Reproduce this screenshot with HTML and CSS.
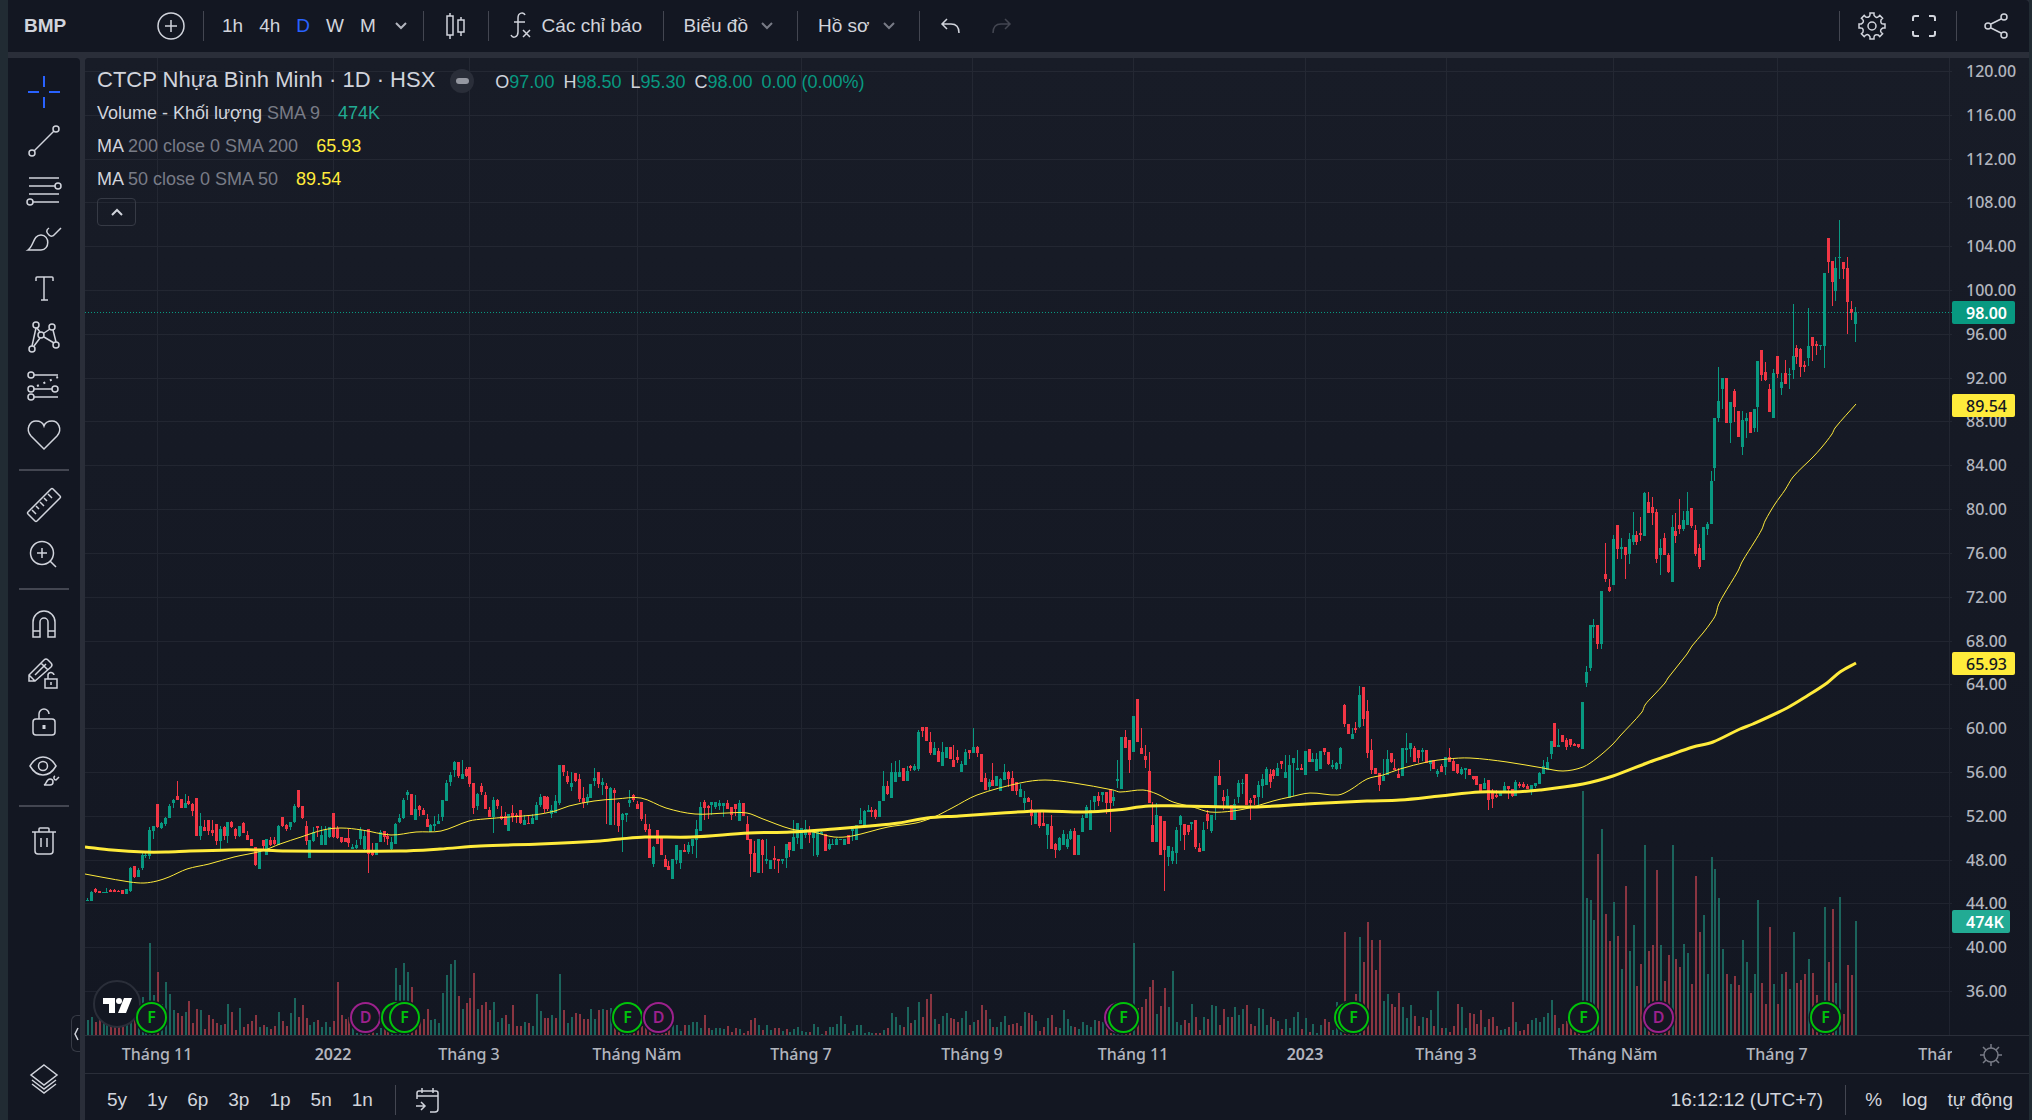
FILE: index.html
```html
<!DOCTYPE html>
<html lang="vi">
<head>
<meta charset="utf-8">
<title>BMP 98.00</title>
<link rel="stylesheet" href="styles.css">
</head>
<body>
<div class="app">
  <header class="topbar">
    <button class="tb symbol">BMP</button>
    <button class="tb add" aria-label="So sánh"><svg class="ic" viewBox="-20 -20 40 40"><circle r="13"/><path d="M-6 0H6M0-6V6"/></svg></button>
    <span class="sep first"></span>
    <nav class="frames">
      <button class="tb">1h</button><button class="tb">4h</button><button class="tb active">D</button><button class="tb">W</button><button class="tb">M</button>
      <button class="tb more" aria-label="Khung thời gian"><svg class="caret light" viewBox="0 0 12 8"><path d="M1 1l5 5 5-5"/></svg></button>
    </nav>
    <span class="sep"></span>
    <button class="tb style" aria-label="Kiểu nến"><svg class="ic" viewBox="-20 -20 40 40"><path d="M-9-10h6V9h-6zM-6-13v3M-6 9v4M2-6h6V6h-6zM5-9v3M5 6v4"/></svg></button>
    <span class="sep"></span>
    <button class="tb indicators"><svg class="ic" viewBox="-20 -20 40 40"><path d="M5-11C4-14-2-14-2-8V6C-2 11-7 13-9 9M-6-4H5M3 4l7 7M10 4l-7 7"/></svg>Các chỉ báo</button>
    <span class="sep"></span>
    <button class="tb layout">Biểu đồ<svg class="caret" viewBox="0 0 12 8"><path d="M1 1l5 5 5-5"/></svg></button>
    <span class="sep"></span>
    <button class="tb profile">Hồ sơ<svg class="caret" viewBox="0 0 12 8"><path d="M1 1l5 5 5-5"/></svg></button>
    <span class="sep"></span>
    <button class="tb undo" aria-label="Hoàn tác"><svg class="ic" viewBox="-20 -20 40 40"><path d="M-3-7l-5 5 5 5M-8-2H1Q9-2 9 7"/></svg></button>
    <button class="tb redo" aria-label="Làm lại"><svg class="ic" viewBox="-20 -20 40 40"><path d="M3-7l5 5-5 5M8-2H-1Q-9-2-9 7"/></svg></button>
    <span class="grow"></span>
    <span class="sep"></span>
    <button class="tb gear" aria-label="Cài đặt"><svg class="ic" viewBox="-20 -20 40 40"><defs><path id="tooth" d="M-2-10.800V-13H2V-10.800Q4-7.500 6.200-9.100"/></defs><use href="#tooth"/><use href="#tooth" transform="rotate(45)"/><use href="#tooth" transform="rotate(90)"/><use href="#tooth" transform="rotate(135)"/><use href="#tooth" transform="rotate(180)"/><use href="#tooth" transform="rotate(225)"/><use href="#tooth" transform="rotate(270)"/><use href="#tooth" transform="rotate(315)"/><circle r="4"/></svg></button>
    <button class="tb full" aria-label="Toàn màn hình"><svg class="ic thick" viewBox="-20 -20 40 40"><path d="M-11-5v-3q0-2 2-2h4M5-10h4q2 0 2 2v3M11 5v3q0 2-2 2H5M-5 10h-4q-2 0-2-2V5"/></svg></button>
    <span class="sep"></span>
    <button class="tb share" aria-label="Chia sẻ"><svg class="ic" viewBox="-20 -20 40 40"><circle cx="-9" r="3"/><circle cx="7" cy="-9" r="3"/><circle cx="7" cy="9" r="3"/><path d="M-6-2L4-7M-6 2L4 7"/></svg></button>
  </header>

  <main class="main">
    <aside class="tools">
      <button class="tool active" aria-label="Con trỏ"><svg class="ic thick" viewBox="-20 -20 40 40"><path d="M-16 0h11M5 0h11M0-16v11M0 5v11"/></svg></button>
      <button class="tool" aria-label="Đường xu hướng"><svg class="ic" viewBox="-20 -20 40 40"><circle cx="-12" cy="12" r="3"/><circle cx="12" cy="-12" r="3"/><path d="M-10 10L10-10"/></svg></button>
      <button class="tool" aria-label="Fibonacci"><svg class="ic" viewBox="-20 -20 40 40"><path d="M-15-12h30M-15-4h26M-15 4h30M-11 12h26"/><circle cx="14" cy="-4" r="3"/><circle cx="-14" cy="12" r="3"/></svg></button>
      <button class="tool" aria-label="Cọ vẽ"><svg class="ic" viewBox="-20 -20 40 40"><path d="M-16 11C-10 7-11-4-3-4 6-4 6 11-3 11zM5-11C2-9 2-7 5-4 7-2 9-3 10-4L17-11"/></svg></button>
      <button class="tool" aria-label="Văn bản"><svg class="ic" viewBox="-20 -20 40 40"><path d="M-8-7v-3q0-1 1-1H8q1 0 1 1v3M0-11V12M-3 12H4"/></svg></button>
      <button class="tool" aria-label="Mô hình"><svg class="ic" viewBox="-20 -20 40 40"><circle cx="-8" cy="-12" r="3"/><circle cx="8" cy="-10" r="3"/><circle cx="-3" cy="-2" r="3"/><circle cx="-12" cy="12" r="3"/><circle cx="12" cy="8" r="3"/><path d="M-12 9l4-18M-7-9l3 4M-4 1l-6 8M0-4l6-4M9-7l3 12M0 0l10 6"/></svg></button>
      <button class="tool" aria-label="Dự báo"><svg class="ic" viewBox="-20 -20 40 40"><circle cx="-13" cy="-11" r="3"/><circle cx="-13" cy="3" r="3"/><circle cx="11" cy="3" r="3"/><circle cx="-13" cy="11" r="3"/><path d="M-10-11h24M-10 3H8M-10 11h24"/><path stroke-dasharray="2 5" stroke-width="2" d="M-7 0L14-9"/></svg></button>
      <button class="tool" aria-label="Biểu tượng"><svg class="ic" viewBox="-20 -20 40 40"><path d="M0 14L-13 1C-19-6-14-14-8-14-4-14-1-12 0-9 1-12 4-14 8-14 14-14 19-6 13 1z"/></svg></button>
      <span class="rule"></span>
      <button class="tool" aria-label="Đo"><svg class="ic" viewBox="-20 -20 40 40"><path d="M9-16l7 7q1 1 0 2L-7 16q-1 1-2 0l-7-7q-1-1 0-2L7-16q1-1 2 0zM-12 5l4 4M-8 1l3 3M-4-3l4 4M0-7l3 3M4-11l4 4"/></svg></button>
      <button class="tool" aria-label="Phóng to"><svg class="ic" viewBox="-20 -20 40 40"><circle cx="-2" cy="-1" r="11.500"/><path d="M6 7l6 6M-7-1H3M-2-6V4"/></svg></button>
      <span class="rule"></span>
      <button class="tool" aria-label="Nam châm"><svg class="ic" viewBox="-20 -20 40 40"><path d="M-11 13V-2a11 11 0 0 1 22 0V13H4V-2a4 4 0 0 0-8 0V13zM-11 7h7M4 7h7"/></svg></button>
      <button class="tool" aria-label="Giữ chế độ vẽ"><svg class="ic" viewBox="-20 -20 40 40"><path d="M-15 8V2L0-13q2-2 4 0l3 3q2 2 0 4L-9 8zM-15 2l6 6M-3-10l7 7M-9 2L2-9M1 6h12v9H1zM4 6V3a3 3 0 0 1 6-1M7 9v3"/></svg></button>
      <button class="tool" aria-label="Khóa"><svg class="ic" viewBox="-20 -20 40 40"><rect x="-11" y="-3" width="22" height="16" rx="3"/><path d="M-5-3v-5a5 5 0 0 1 10 0"/><path stroke-width="3" d="M0 3v4"/></svg></button>
      <button class="tool" aria-label="Ẩn"><svg class="ic" viewBox="-20 -20 40 40"><path d="M-14-5C-7-17 5-17 12-5 5 7-7 7-14-5zM0 14c3-1 2-6 6-6s4 6 0 6zM11 5c-2 1-1 4 1 4l3-3"/><circle cx="-1" cy="-5" r="4.500"/></svg></button>
      <span class="rule"></span>
      <button class="tool" aria-label="Xóa"><svg class="ic" viewBox="-20 -20 40 40"><path d="M-12-9h24M-5-9v-3q0-1 1-1h8q1 0 1 1v3M-9-9V10q0 3 3 3H6q3 0 3-3V-9M-3-3v9M3-3v9"/></svg></button>
      <span class="grow"></span>
      <button class="tool layers" aria-label="Cây đối tượng"><svg class="ic" viewBox="-20 -20 40 40"><path d="M0-14L13-4 0 6-13-4zM-12 1L0 10 12 1M-12 5L0 14 12 5"/></svg></button>
      <button class="handle" aria-label="Ẩn thanh công cụ"><svg viewBox="0 0 8 16"><path d="M6 2L3 8l3 6"/></svg></button>
    </aside>

    <section class="chart">
      <div class="panes">
        <svg class="plot" id="plot"></svg>
        <svg class="prices" id="prices"></svg>
        <div class="legend">
          <div class="line head">
            <h1>CTCP Nhựa Bình Minh · 1D · HSX</h1>
            <span class="status"></span>
            <span class="ohlc"><span>O<b>97.00</b></span><span>H<b>98.50</b></span><span>L<b>95.30</b></span><span>C<b>98.00</b></span><span><b>0.00 (0.00%)</b></span></span>
          </div>
          <div class="line">Volume - Khối lượng <i>SMA 9</i><b class="vol">474K</b></div>
          <div class="line">MA <i>200 close 0 SMA 200</i><b class="ma">65.93</b></div>
          <div class="line">MA <i>50 close 0 SMA 50</i><b class="ma">89.54</b></div>
          <button class="fold" aria-label="Thu gọn"><svg viewBox="0 0 12 8"><path d="M1 7l5-5 5 5"/></svg></button>
        </div>
      </div>
      <div class="times">
        <svg class="ticks" id="ticks"></svg>
        <button class="sun" aria-label="Cài đặt trục"><svg viewBox="-12 -12 24 24"><circle r="7"/><path d="M0-7v-4M0 7v4M-7 0h-4M7 0h4M-5-5l-3-3M5-5l3-3M-5 5l-3 3M5 5l3 3"/></svg></button>
      </div>
      <footer class="bottom">
        <button>5y</button><button>1y</button><button>6p</button><button>3p</button><button>1p</button><button>5n</button><button>1n</button>
        <span class="sep"></span>
        <button class="goto" aria-label="Đi đến ngày"><svg class="ic" viewBox="-20 -20 40 40"><path d="M-10-1v-6q0-2 2-2H9q2 0 2 2V9q0 3-3 3H3M-10-4h21M-5-12v5M6-12v5M-11 6h9M-6 2l4 4-4 4"/></svg></button>
        <span class="grow"></span>
        <button class="clock">16:12:12 (UTC+7)</button>
        <span class="sep"></span>
        <button class="pct">%</button><button>log</button><button>tự động</button>
      </footer>
    </section>
  </main>
</div>
<script src="chart.js"></script>
</body>
</html>
```
FILE: styles.css
```css
* { box-sizing: border-box; }

body {
  margin: 0;
  background: #212b33;
  color: #d1d4dc;
  font-family: "Liberation Sans", Arial, sans-serif;
  font-size: 19px;
}

button {
  margin: 0;
  padding: 0;
  border: 0;
  background: none;
  color: inherit;
  font: inherit;
  white-space: nowrap;
}

svg { display: block; fill: none; stroke: currentColor; }

.app {
  display: flex;
  flex-direction: column;
  gap: 6px;
  min-height: 100vh;
  margin: 0 3px 0 8px;
  background: #2a2e39;
}

.grow { flex: 1; }
.sep { flex: none; width: 1px; height: 30px; background: #434651; }
.ic { width: 40px; height: 40px; stroke-width: 1.500; }
.ic.thick { stroke-width: 2; }

/* Top bar */
.topbar {
  display: flex;
  align-items: center;
  height: 52px;
  background: #131722;
  border-radius: 0 4px 0 0;
}
.tb { display: flex; align-items: center; justify-content: center; height: 38px; }
.symbol { width: 140px; padding-left: 16px; justify-content: flex-start; font-weight: bold; }
.add { width: 46px; }
.sep.first { margin: 0 10px 0 9px; }
.frames { display: flex; }
.frames .tb { padding: 0 8px; }
.frames .more { width: 39px; padding: 0 4px 0 0; }
.tb.active { color: #2962ff; }
.caret { width: 12px; height: 8px; stroke: #787b86; stroke-width: 2; }
.caret.light { stroke: #b2b5be; }
.style { width: 64px; }
.indicators { width: 174px; gap: 2px; padding-right: 10px; }
.layout { width: 133px; gap: 13px; padding-right: 4px; }
.profile { width: 121px; gap: 13px; padding-right: 4px; }
.undo { width: 60px; }
.redo { width: 44px; color: #434651; }
.gear { width: 64px; }
.full { width: 52px; padding-right: 12px; }
.share { width: 72px; padding-left: 8px; }

/* Body */
.main { display: flex; flex: 1; gap: 5px; }

.tools {
  position: relative;
  display: flex;
  flex-direction: column;
  align-items: center;
  width: 72px;
  padding-top: 9px;
  background: #131722;
  border-radius: 0 4px 0 0;
}
.tool { display: grid; place-items: center; width: 49px; height: 49px; }
.tool.active { color: #2962ff; }
.rule { width: 50px; height: 2px; margin: 10px 0 9px; background: #434651; }
.layers { margin-bottom: 17px; }
.handle {
  position: absolute;
  right: 0;
  bottom: 68px;
  width: 9px;
  height: 37px;
  border: 1px solid #363a45;
  border-right: 0;
  border-radius: 6px 0 0 6px;
}
.handle svg { width: 8px; height: 16px; stroke-width: 1.500; }

.chart { display: flex; flex: 1; flex-direction: column; min-width: 0; background: #131722; border-radius: 4px 0 0 0; }
.panes {
  position: relative;
  display: flex;
  flex: 1;
  min-height: 977px;
  background: linear-gradient(#181c27, #131722);
  border-radius: 4px 0 0 0;
}
.plot { flex: 1; min-width: 0; }
.prices { flex: none; width: 77px; }

.legend { position: absolute; top: 6px; left: 12px; font-size: 18px; }
.line { display: flex; align-items: center; height: 33px; white-space: pre; }
.line b, .line i { font-weight: normal; font-style: normal; }
.line i { color: #787b86; }
.line h1 { margin: 0; padding-bottom: 2px; font-size: 22px; font-weight: normal; }
.line .vol { margin-left: 18px; color: #22ab94; }
.line .ma { margin-left: 18px; color: #ffeb3b; }
.status { display: grid; place-items: center; width: 24px; height: 24px; margin: 0 21px 0 15px; border-radius: 12px; background: #2a2e39; }
.status::before { content: ""; width: 13px; height: 6px; border-radius: 3px; background: #9598a1; }
.ohlc { display: flex; gap: 9px; padding-top: 3px; }
.ohlc b { color: #089981; }
.fold { display: grid; place-items: center; width: 39px; height: 28px; margin-top: 2px; border: 1px solid #363a45; border-radius: 4px; }
.fold svg { width: 12px; height: 8px; stroke-width: 2; }

.times { display: flex; height: 39px; border-top: 1px solid #2a2e39; border-bottom: 1px solid #2a2e39; }
.ticks { flex: 1; min-width: 0; height: 37px; }
.sun { display: grid; place-items: center; width: 77px; color: #787b86; }
.sun svg { width: 24px; height: 24px; stroke-width: 1.500; }

.bottom { display: flex; align-items: center; height: 46px; padding: 6px 6px 0 12px; }
.bottom button { padding: 0 10px; }
.bottom .sep { margin: 0 9px 0 12px; }
.bottom .goto { padding: 0 2px; }

/* Chart drawing */
.grid { stroke: #f0f3fa; stroke-opacity: .06; }
.up { fill: #089981; stroke: none; }
.down { fill: #f23645; stroke: none; }
.vol-up { fill: #1b645c; stroke: none; }
.vol-down { fill: #8a3541; stroke: none; }
.ma50 { stroke: #ffeb3b; stroke-width: 1; }
.ma200 { stroke: #ffeb3b; stroke-width: 3; }
.last { stroke: #089981; stroke-dasharray: 1 2; }
.axis { fill: #b2b5be; stroke: none; font-family: "Noto Sans", sans-serif; font-size: 16px; font-weight: 500; }
.axis.year { font-weight: 600; }
.axis.white { fill: #fff; font-weight: 600; }
.axis.black { fill: #131722; }
.mid { text-anchor: middle; }
.badge { font-family: "Noto Sans", sans-serif; font-size: 16px; font-weight: 600; text-anchor: middle; stroke: none; }
```
FILE: chart.js
```js
const NS = 'http://www.w3.org/2000/svg';
const LAST_X = 1855, STEP = 3.903, LEFT = 85, TOP = 58, BASE = 1035, AXIS = 1952;

// Blocks of bars: origin, horizontal and vertical units per pixel, rows.
// Candle row: x high bodyTop bodyBottom low direction
const candles = [
  [80, 740, 2.8, 3, `21 474 480 483 483 g,32 453 456 483 483 g,43 444 447 457 459 r,54 453 453 459 459 r,65 456 456 459 459 g,75 444 456 459 459 g,86 447 450 456 456 r,97 447 450 456 456 r,108 450 453 456 456 r,119 450 450 462 462 r,130 447 447 462 462 g,141 381 384 453 456 g,152 378 378 411 414 r,163 384 390 411 411 g,172 334 345 384 390 g,183 340 345 348 354 g,194 261 270 348 357 g,206 258 258 273 297 g,217 192 192 262 265 r,228 246 249 264 267 g,239 231 234 252 258 g,250 192 198 234 234 g,261 177 180 189 204 g,272 123 168 180 180 r,284 177 177 204 204 r,293 162 189 204 204 g,304 168 183 192 195 r,315 189 192 213 228 r,326 174 174 288 288 r,337 219 258 288 300 g,348 240 261 273 273 r,359 240 240 273 285 r,371 240 270 279 288 r,382 252 252 303 315 r,393 258 267 303 330 g,402 258 261 288 300 r,413 246 246 288 309 g,424 243 246 261 264 r,435 264 267 288 297 r,446 258 258 288 291 g,458 246 249 279 279 r,469 273 285 300 300 r,480 297 297 318 318 r,491 321 321 375 378 r,502 330 330 387 387 g,511 300 300 318 330 r,522 297 297 345 345 g,533 291 300 315 318 r,544 291 300 312 315 r,556 255 258 315 315 g,567 231 231 258 261 r,578 252 255 267 273 r,589 246 246 261 270 g,600 192 198 246 249 g,611 150 150 201 204 r,620 198 198 234 237 r,631 243 258 303 315 r,642 300 300 354 354 g,653 261 276 303 306 g,664 258 258 264 291 r,676 258 285 315 315 g,687 258 270 315 315 g,698 261 261 291 294 g,709 219 219 291 294 r,720 258 264 294 297 r,731 291 291 306 309 r,740 294 294 306 306 r,751 267 294 309 321 r,763 312 321 327 327 g,774 300 315 324 327 g,785 261 270 297 315 g,796 273 288 327 333 g,807 267 267 342 399 r,818 309 336 345 348 r,829 309 309 345 345 g,838 270 276 306 306 g,849 273 273 291 306 r,860 279 288 297 315 r,872 291 306 327 330 g,883 249 252 312 312 g,894 222 234 246 249 g,905 174 180 234 237 g,917 150 156 165 180 g,928 162 162 225 225 r,939 165 207 240 240 g,948 195 198 210 228 r,959 204 210 225 225 r,970 222 237 261 261 r,981 252 255 276 276 g,992 228 252 258 273 g,1003 222 243 252 252 g,1014 180 180 231 243 g,1026 120 129 183 183 g,1037 96 105 126 138 g,1048 63 66 90 111 g,1057 66 66 108 114 r,1068 60 102 117 117 g,1080 81 87 108 111 r,1091 81 81 132 141 r,1102 129 129 204 222 r,1113 159 162 198 210 g,1124 129 138 156 165 r,1135 156 165 207 207 r,1146 201 210 231 231 r,1157 171 180 231 279 g,1168 177 180 198 207 r,1177 198 228 237 240 r,1188 216 228 255 255 r,1200 222 222 273 273 g,1211 195 219 231 246 r,1222 219 225 231 249 r,1233 210 210 249 252 r,1244 225 240 255 255 g,1255 228 249 252 252 r,1266 222 234 252 252 g,1277 186 195 240 240 g,1286 162 171 195 201 g,1297 168 168 207 219 r,1309 168 171 207 213 r,1320 195 210 222 234 g,1331 165 183 219 219 g,1342 75 75 189 195 g,1353 75 75 96 108 r,1364 93 108 126 132 r,1376 96 129 141 153 g,1387 99 99 123 126 r,1396 102 117 177 186 r,1407 141 174 189 204 r,1418 162 171 186 195 g,1429 132 132 174 174 g,1440 84 114 123 138 g,1451 96 96 132 144 r,1462 114 126 135 165 g,1473 129 138 147 252 r,1485 141 144 255 255 g,1496 144 150 159 255 r,1505 186 189 258 276 r`],
  [620, 700, 2.8, 3, `4 340 342 360 456 g,15 340 340 346 366 g,26 270 300 309 321 g,37 282 285 300 306 r,49 303 312 327 327 r,60 306 306 357 363 r,71 342 372 390 396 r,82 372 387 474 474 r,94 438 441 492 501 g,102 390 390 432 432 r,113 411 411 465 465 r,124 465 477 501 501 r,136 483 498 510 510 r,147 477 477 537 537 g,158 435 435 480 492 g,169 450 450 489 507 g,180 432 450 456 456 r,192 426 435 456 462 g,203 417 417 438 462 g,211 360 387 420 474 g,222 306 321 393 393 g,234 300 306 324 360 r,245 315 318 324 357 r,256 306 306 315 345 g,267 306 306 321 327 g,278 300 309 318 330 g,289 309 309 318 351 g,301 300 309 327 327 r,312 321 321 345 360 r,320 312 312 327 348 r,332 300 309 363 363 g,343 309 309 348 348 r,354 348 372 420 420 r,365 417 417 462 531 r,376 423 459 516 516 r,388 417 417 519 519 g,399 417 420 465 519 r,410 417 477 483 492 g,421 480 480 507 507 g,430 438 474 480 507 r,441 477 477 483 519 r,452 477 477 483 492 g,463 432 432 474 504 g,474 426 426 450 471 r,486 360 411 453 453 g,497 369 369 414 432 g,508 384 384 447 447 g,519 360 387 405 414 g,530 378 390 405 429 r,541 390 393 414 468 g,550 390 390 465 471 g,561 393 396 402 402 g,572 402 402 453 453 r,583 417 432 447 450 g,595 417 432 435 435 g,606 414 417 435 435 g,617 417 417 420 420 g,628 417 417 435 435 g,640 405 405 432 432 r,651 381 387 393 423 g,659 375 375 420 420 g,670 324 360 372 372 g,682 330 333 375 375 g,693 315 330 336 336 g,704 321 330 336 351 r,715 327 330 351 357 r,726 303 303 351 351 g,738 213 258 303 303 g,749 243 258 282 285 r,760 189 216 294 294 g,768 183 216 246 246 g,780 180 216 231 231 g,791 204 204 243 243 r,802 198 213 243 243 g,813 195 198 204 213 r,824 192 198 210 213 g,836 90 96 207 213 g,847 81 81 93 111 r,858 81 81 123 123 r,869 96 126 159 165 r,877 126 144 165 165 g,889 144 153 186 186 r,900 126 156 198 198 g,911 141 141 174 174 g,922 141 141 177 177 r,933 135 180 201 201 r,945 150 171 180 189 r,956 183 192 216 216 g,967 147 156 195 195 g,978 150 150 159 177 r,987 84 141 159 159 g,998 138 141 159 171 r,1009 162 162 246 246 r,1020 219 234 270 270 r,1032 237 246 261 273 g,1043 189 240 258 258 r,1054 228 228 258 258 g,1065 234 237 273 273 g,1076 192 216 240 240 g,1087 213 216 237 261 r,1096 213 234 273 273 r,1107 246 246 273 285 r,1119 252 267 291 291 g,1132 273 294 309 330 g,1144 291 294 306 306 r,1155 300 327 348 375 r,1166 330 330 372 372 g,1177 330 330 378 384 r,1188 336 369 378 378 r,1200 372 372 405 447 g,1208 345 378 447 447 r,1219 429 432 450 474 r,1230 411 414 450 453 g,1242 390 402 435 435 g,1253 402 417 441 447 g,1264 387 393 417 420 g,1275 384 393 465 465 r,1286 405 405 465 465 g,1298 345 354 396 396 g,1309 315 321 354 354 g,1317 300 330 390 390 g,1328 288 288 306 330 g,1340 276 288 303 318 r,1351 276 276 285 306 g,1362 276 276 309 342 r,1373 267 267 309 396 r,1384 273 291 303 318 g,1395 180 237 243 264 g`],
  [1120, 660, 3, 3, `7 231 231 387 387 g,19 210 231 264 264 r,31 240 240 300 339 r,40 168 168 276 276 g,52 117 117 246 246 r,64 204 264 282 282 r,76 255 288 300 324 r,88 276 333 429 429 r,100 426 495 546 546 r,112 429 465 546 546 g,124 468 468 585 585 r,136 483 483 570 693 r,148 558 558 591 618 g,157 561 573 603 612 g,169 501 510 579 612 g,181 465 468 495 543 g,193 492 492 525 570 r,205 495 495 516 525 r,217 486 486 492 510 g,229 480 480 561 567 r,241 549 564 576 576 r,253 486 510 573 573 g,265 450 462 483 507 r,274 465 465 513 519 g,286 348 348 444 480 g,298 300 348 375 375 r,310 390 411 423 450 r,322 387 408 438 438 g,334 435 435 480 480 r,346 417 432 480 480 g,358 360 369 411 429 g,370 357 369 372 402 g,382 342 342 435 435 r,391 414 420 429 480 r,403 405 405 414 435 r,415 363 375 411 438 g,427 342 357 378 414 g,439 321 327 375 375 g,451 327 342 366 384 r,463 327 330 348 357 r,475 309 324 348 348 g,487 303 303 312 327 r,499 285 336 354 354 g,508 285 315 414 414 g,520 294 294 309 408 g,532 270 324 330 330 g,544 312 324 330 330 r,556 273 273 345 345 g,568 267 267 306 306 r,580 279 297 306 306 g,592 279 297 333 333 g,604 273 273 327 327 g,616 264 264 276 285 r,625 276 276 312 315 r,637 300 315 321 327 g,649 306 309 327 330 g,661 261 264 312 327 g,673 132 135 192 201 r,685 192 192 222 222 r,697 204 222 237 237 g,709 186 204 210 219 r,721 78 105 201 204 g,733 81 81 177 198 r,742 120 153 279 294 r,754 237 270 330 342 r,766 324 324 342 342 r,778 339 339 375 393 r,790 297 348 363 363 g,802 270 297 345 345 g,814 279 279 306 309 r,826 297 324 330 330 r,838 324 342 354 354 r,850 264 264 348 348 g,859 219 264 270 309 g,871 249 249 267 291 g,883 258 264 306 306 r,895 270 270 294 309 r,907 264 270 276 303 g,919 270 270 309 309 r,931 300 300 312 333 g,943 300 300 327 327 r,955 327 333 342 351 g,967 312 318 336 336 r,979 291 291 321 345 g,988 264 291 306 306 r,1000 297 303 333 333 r,1012 312 312 339 342 r,1024 321 327 342 345 g,1036 324 324 330 357 g,1048 327 327 345 345 r,1060 348 348 357 360 r,1072 348 348 375 375 r,1084 372 372 396 396 r,1096 354 369 387 387 g,1105 360 360 420 450 r,1117 387 399 417 444 r,1129 390 405 411 414 r,1141 393 396 408 408 g,1153 366 378 393 393 g,1165 378 378 387 417 r,1177 387 387 408 411 r,1189 360 366 408 408 g,1201 366 372 378 384 r,1213 366 372 381 384 r,1222 372 378 387 387 r,1234 375 375 390 405 g,1246 369 369 378 384 g,1258 336 339 372 372 g,1270 300 318 342 342 g,1282 291 306 330 330 g,1294 243 243 282 297 g,1306 189 189 261 261 r,1318 207 255 261 261 g,1330 225 225 246 246 r,1339 234 240 261 270 r,1351 237 237 255 261 r,1363 249 252 258 258 r,1375 252 252 261 264 r,1387 126 126 267 267 g`],
  [1540, 360, 3, 3, `139 918 936 969 981 g,151 795 795 924 933 g,163 777 795 801 834 g,175 795 795 852 867 r,187 693 693 852 867 g,196 549 642 657 666 r,208 657 681 693 696 r,220 525 537 675 675 g,232 495 495 567 597 r,244 534 561 567 597 g,256 561 561 585 657 r,268 519 537 582 612 g,280 456 525 546 555 g,292 513 525 546 555 r,304 471 519 525 543 r,313 396 399 528 528 g,325 396 426 459 459 r,337 411 441 459 495 r,349 447 456 597 609 r,361 537 564 585 645 g,373 519 534 585 585 r,385 579 585 636 639 r,397 465 501 666 666 g,409 459 513 528 549 r,421 417 495 507 522 r,430 453 480 507 513 g,442 396 453 495 495 g,454 444 444 498 504 r,466 495 510 582 588 r,478 552 564 621 627 r,490 501 501 600 600 g,502 486 492 507 525 g,514 333 363 492 492 g,526 174 174 324 363 g,538 21 123 174 186 g,547 54 54 87 147 g,559 54 54 189 189 r,571 126 126 189 249 g,583 87 93 141 186 r,595 153 153 231 231 r,607 153 180 261 285 g,619 159 174 183 234 g,631 156 156 219 219 r,643 147 147 204 216 g,655 3 3 141 216 g,667 -30 -30 45 63 r,676 6 36 60 63 r,688 72 87 156 156 r,700 27 39 174 174 g,712 -12 -12 42 54 r,724 39 66 84 105 g,736 0 39 72 72 r,748 24 42 45 87 g,760 -168 -12 30 57 g,772 -45 -36 -9 12 r,784 -36 -33 21 51 r,793 3 15 21 36 r,805 -156 -42 -6 18 g,817 -69 -69 -42 3 r,829 -57 -48 -42 -15 r,841 -45 -45 -42 -30 g,853 -261 -261 -42 24 g,865 -366 -366 -294 -261 r,877 -297 -297 -234 -162 r,889 -309 -276 -207 -177 g,901 -420 -309 -306 -243 g,910 -294 -294 -273 -243 r,922 -309 -276 -174 -78 r,934 -177 -153 -141 -120 r,946 -159 -144 -108 -54 g`]
];

// Volume row: x top direction
const volumes = [
  [80, 740, 2.8, 3, `19 840 g,31 831 g,42 846 r,53 840 r,64 843 g,76 850 g,87 856 r,97 850 r,108 856 r,119 858 r,130 850 g,141 846 g,152 837 r,162 800 g,173 771 g,184 790 g,195 609 g,207 765 g,218 696 r,229 792 g,238 726 g,249 762 g,261 810 g,271 819 r,283 828 r,294 816 g,305 783 r,316 849 r,327 807 r,339 810 g,350 867 r,359 825 r,370 837 r,381 849 r,392 855 g,403 852 r,414 792 g,425 816 r,437 870 r,448 804 g,457 861 r,468 852 r,479 843 r,490 825 r,501 861 g,513 855 r,523 861 g,535 867 r,546 858 r,557 816 g,566 843 r,577 858 r,588 819 g,599 774 g,610 831 r,621 795 r,632 834 r,644 855 g,655 846 g,666 840 r,675 861 g,686 846 g,697 861 g,709 843 r,719 726 r,731 825 r,742 837 r,753 831 r,764 864 g,773 878 g,784 870 g,796 876 g,807 870 r,818 866 r,829 878 g,840 864 g,851 840 r,862 850 r,873 846 g,885 684 g,893 735 g,904 669 g,915 696 g,927 741 r,938 837 r,949 837 r,960 837 r,971 807 r,982 840 g,993 837 g,1002 849 g,1013 759 g,1024 705 g,1036 672 g,1047 660 g,1058 768 r,1069 807 g,1080 789 r,1091 774 r,1103 699 r,1111 807 g,1123 795 r,1134 786 r,1145 810 r,1156 786 g,1167 846 g,1179 834 g,1190 825 r,1201 852 g,1212 795 r,1222 858 r,1232 858 r,1243 846 g,1254 849 r,1265 858 g,1276 762 g,1287 813 g,1299 834 r,1310 834 r,1321 825 g,1332 834 r,1341 702 g,1352 810 r,1363 849 g,1375 831 g,1386 819 r,1397 822 r,1408 837 r,1419 837 r,1430 807 g,1441 837 g,1450 810 r,1461 807 g,1472 810 r,1484 804 g,1495 850 r,1506 860 r`],
  [620, 700, 2.8, 3, `4 998 g,15 998 g,26 990 g,37 985 r,49 975 r,60 978 r,71 981 r,82 990 r,94 998 g,105 990 r,116 1000 r,127 998 r,138 975 r,149 975 g,158 975 g,168 993 g,180 975 r,191 975 g,202 966 g,213 966 g,224 984 g,235 945 r,246 984 r,257 990 g,267 984 g,278 984 g,289 987 g,300 978 r,311 996 r,322 984 r,333 987 g,345 999 r,356 993 r,367 960 r,376 954 r,387 975 g,398 990 r,409 975 g,421 990 g,432 984 r,443 984 r,454 993 g,465 987 r,476 996 g,485 987 g,496 981 g,507 993 g,518 996 g,529 996 r,541 972 g,552 981 g,563 1002 g,574 993 r,585 981 g,594 981 g,605 972 g,616 948 g,627 972 g,639 999 r,650 993 g,661 975 g,672 975 g,683 1000 g,694 996 g,703 1000 g,714 1000 r,725 998 r,737 990 g,748 984 r,759 939 g,770 951 g,781 975 g,792 981 r,803 921 g,814 969 r,823 960 g,834 906 g,846 951 r,857 897 r,868 882 r,879 957 g,890 972 r,901 948 g,913 939 g,924 954 r,933 957 r,944 966 r,955 954 g,966 933 g,977 975 r,989 966 g,1000 960 r,1011 915 r,1022 930 r,1033 957 g,1042 981 r,1053 981 g,1064 966 g,1075 948 g,1087 975 r,1098 972 r,1109 969 r,1120 978 r,1134 936 g,1145 939 r,1153 945 r,1165 963 g,1176 993 r,1187 981 r,1198 954 g,1209 945 r,1221 981 r,1232 984 g,1243 930 g,1254 957 g,1265 978 g,1274 981 r,1285 987 g,1297 966 g,1308 975 g,1319 981 g,1330 960 g,1341 963 r,1352 966 g,1362 975 r,1373 998 r,1384 1000 g,1395 1002 g`],
  [1120, 660, 3, 3, `7 1115 g,19 1110 r,30 1112 r,42 849 g,54 1044 r,66 1041 r,78 1017 r,90 981 r,99 960 r,111 1062 g,123 1038 r,135 984 r,147 1041 g,159 933 g,171 1086 g,183 1095 g,195 1080 r,207 1089 r,216 1032 g,228 1071 r,240 1110 r,252 1071 g,264 1077 r,276 1035 g,288 1038 g,300 1095 r,312 1047 r,324 1071 g,333 1071 r,345 1041 g,357 1065 g,369 1047 g,381 1035 r,393 1092 r,405 1098 r,417 1044 g,429 1047 g,441 1095 g,450 1071 r,462 1077 r,474 1083 g,486 1107 r,498 1077 g,510 1104 g,522 1071 g,534 1056 g,546 1107 r,558 1074 g,567 1116 r,579 1092 g,591 1119 g,603 1095 g,615 1077 r,627 1086 r,639 1110 g,651 1026 g,663 1104 g,675 816 r,684 1120 r,696 1110 g,708 1002 r,720 831 g,732 906 r,744 786 r,756 840 r,768 930 r,780 840 r,792 1023 g,801 1002 g,813 1032 r,825 1041 r,837 999 r,849 1041 g,861 1074 g,873 1035 g,885 1068 r,897 1098 r,909 1071 g,918 1074 r,930 1050 g,942 1098 r,954 993 g,966 1104 r,978 1104 g,990 1116 r,1002 1098 r,1014 1032 r,1026 1041 g,1038 1104 g,1047 1059 r,1059 1062 r,1071 1092 r,1083 1050 r,1095 1101 g,1107 1077 r,1119 1071 r,1131 1098 r,1143 1110 g,1155 1107 g,1164 1101 r,1176 1026 r,1188 1086 g,1200 1113 r,1212 1110 r,1224 1092 r,1236 1080 g,1248 1074 g,1260 1086 g,1272 1071 g,1281 1059 g,1293 1020 g,1305 1065 r,1317 1104 g,1329 1092 r,1341 1083 r,1353 1095 r,1365 1105 r,1377 1110 r,1389 393 g,1398 714 g,1410 720 g,1422 780 g,1434 582 r,1446 507 g,1458 762 r,1470 843 r,1482 726 g,1494 828 r,1506 927 g,1515 678 r,1527 873 g,1539 795 g,1551 978 r`],
  [1640, 900, 3, 3, `3 192 r,15 -165 g,27 153 r,39 135 r,51 -90 r,63 135 g,72 243 r,84 165 r,96 -165 g,108 177 r,120 201 r,132 132 g,144 159 g,156 252 r,168 -72 r,180 96 r,189 45 g,201 222 g,213 -129 g,225 -93 g,237 -6 g,249 147 g,261 222 r,273 252 g,285 228 r,297 255 r,306 120 g,318 186 g,330 279 r,342 222 g,354 0 g,366 249 r,378 312 r,390 81 r,402 252 g,414 312 r,426 222 g,435 216 r,447 267 g,459 96 g,471 249 r,483 240 r,495 222 r,507 177 g,519 219 r,531 285 r,543 390 g,552 21 g,564 186 r,576 27 r,588 249 g,600 -9 g,612 342 r,624 195 r,636 225 r,648 63 g`]
];

const ma200 = '85,847 112,850 144,852 166,852 190,851 230,850 262,850 285,851 400,851 440,849 480,846 540,844 600,841 620,839 645,837 691,837 749,833 791,832 834,829 870,826 899,823 927,818 959,816 1002,813 1041,811 1084,812 1116,810 1149,806 1180,806 1253,807 1307,804 1367,801 1400,800 1440,796 1480,792 1513,792 1540,790 1583,784 1613,776 1647,763 1667,756 1693,747 1713,742 1740,729 1753,724 1787,708 1807,696 1827,683 1840,672 1856,663';
const ma50 = '85,874 101,877 130,882 144,883 157,881 169,877 187,869 209,864 234,857 262,851 280,844 301,837 323,830 341,828 362,830 391,835 416,832 441,831 469,821 484,819 509,817 534,815 555,811 569,806 594,801 616,799 641,798 666,808 695,814 727,813 747,813 763,819 791,829 813,832 834,837 852,836 888,827 916,823 934,817 952,808 977,795 1020,783 1045,780 1074,783 1113,790 1120,792 1143,790 1157,794 1173,802 1193,807 1210,812 1233,811 1253,807 1273,801 1290,797 1310,793 1338,795 1350,790 1367,779 1383,775 1400,769 1427,762 1447,759 1470,758 1507,762 1543,768 1563,771 1583,767 1597,758 1613,744 1620,736 1642,712 1645,705 1653,696 1665,683 1668,678 1687,654 1692,646 1703,633 1712,621 1716,614 1718,606 1723,596 1738,571 1742,562 1755,541 1762,529 1765,521 1775,504 1785,490 1793,477 1813,457 1822,447 1832,434 1835,428 1856,404';

const months = [[157, 'Tháng 11'], [333, '2022', 1], [469, 'Tháng 3'], [637, 'Tháng Năm'], [801, 'Tháng 7'], [972, 'Tháng 9'], [1133, 'Tháng 11'], [1305, '2023', 1], [1446, 'Tháng 3'], [1613, 'Tháng Năm'], [1777, 'Tháng 7'], [1949, 'Tháng 9']];
// A third entry marks a badge that sits under its neighbour and carries no letter.
const badges = [[151, 'F'], [365, 'D'], [396, 'F', 1], [404, 'F'], [627, 'F'], [658, 'D'], [1119, 'D', 1], [1123, 'F'], [1349, 'F', 1], [1353, 'F'], [1583, 'F'], [1658, 'D'], [1825, 'F']];

function add(parent, tag, attrs, text) {
  const el = document.createElementNS(NS, tag);
  for (const k in attrs) el.setAttribute(k, attrs[k]);
  if (text) el.textContent = text;
  parent.appendChild(el);
  return el;
}
const slot = x => Math.floor(LAST_X + 0.5 - Math.round((LAST_X + 0.5 - x) / STEP) * STEP);
const priceY = p => 71 + Math.round((120 - p) * 920 / 84);
function each(blocks, fn) {
  for (const [ox, oy, ux, uy, rows] of blocks)
    for (const row of rows.split(',')) {
      const f = row.split(' '), dir = f.pop();
      fn(slot(ox + (+f[0]) / ux), f.slice(1).map(v => Math.round(oy + v / uy)), dir === 'g');
    }
}
// Curve through all the points, with each tangent taken from the two neighbours.
function curve(points) {
  const p = points.split(' ').map(s => s.split(',').map(Number));
  let d = `M${p[0]}`;
  for (let i = 0; i < p.length - 1; i++) {
    const a = p[i - 1] || p[i], b = p[i], c = p[i + 1], e = p[i + 2] || c;
    const w = (c[0] - b[0]) / 3;
    const m1 = (c[1] - a[1]) / (c[0] - a[0]), m2 = (e[1] - b[1]) / (e[0] - b[0]);
    d += `C${b[0] + w} ${b[1] + m1 * w} ${c[0] - w} ${c[1] - m2 * w} ${c[0]} ${c[1]}`;
  }
  return d;
}

const plot = add(document.getElementById('plot'), 'g', { transform: `translate(${-LEFT} ${-TOP})` });
const crisp = { 'shape-rendering': 'crispEdges' };
const grid = add(plot, 'g', { class: 'grid', ...crisp });
let d = '';
for (let p = 120; p >= 36; p -= 4) d += `M${LEFT} ${priceY(p) + .5}H3000`;
for (const [x] of months) d += `M${x + .5} ${TOP}V${BASE}`;
add(grid, 'path', { d });

const bars = add(plot, 'g', crisp);
each(volumes, (x, [top], up) =>
  add(bars, 'rect', { x, y: top, width: 2, height: Math.max(1, BASE - top), class: up ? 'vol-up' : 'vol-down' }));
each(candles, (x, [hi, top, bottom, lo], up) => {
  const c = up ? 'up' : 'down';
  add(bars, 'rect', { x, y: hi, width: 1, height: Math.max(1, lo - hi), class: c });
  add(bars, 'rect', { x: x - 1, y: top, width: 3, height: Math.max(1, bottom - top), class: c });
});
add(plot, 'path', { d: curve(ma50), class: 'ma50' });
add(plot, 'path', { d: curve(ma200), class: 'ma200' });
add(plot, 'path', { d: `M${LEFT} 312.5H3000`, class: 'last', ...crisp });

add(plot, 'circle', { cx: 117, cy: 1004, r: 23, fill: '#131722', stroke: '#2a2e39', 'stroke-width': 2 });
add(plot, 'path', { d: 'M103 998H115V1013H109V1004H103zM124 998H132L126 1013H118z', fill: '#fff', stroke: 'none' });
add(plot, 'circle', { cx: 119, cy: 1001, r: 3, fill: '#fff', stroke: 'none' });
for (const [x, t, under] of badges) {
  const c = t === 'F' ? '#00c40a' : '#9c218c';
  add(plot, 'circle', { cx: x + .5, cy: 1017.5, r: 17, fill: '#131722', stroke: 'none' });
  add(plot, 'circle', { cx: x + .5, cy: 1017.5, r: 14.5, stroke: c, 'stroke-width': 2 });
  if (!under) add(plot, 'text', { x: x + .5, y: 1023, fill: c, class: 'badge' }, t);
}

const prices = add(document.getElementById('prices'), 'g', { transform: `translate(${-AXIS} ${-TOP})` });
for (let p = 120; p >= 36; p -= 4) add(prices, 'text', { x: 1966, y: priceY(p) + 6, class: 'axis' }, p.toFixed(2));
for (const [y, w, bg, text, tone] of [[312, 63, '#089981', '98.00', 'white'], [405, 63, '#ffeb3b', '89.54', 'black'], [663, 63, '#ffeb3b', '65.93', 'black'], [921, 58, '#22ab94', '474K', 'white']]) {
  add(prices, 'rect', { x: AXIS, y: y - 11, width: w, height: 23, rx: 2, fill: bg, stroke: 'none' });
  add(prices, 'text', { x: 1966, y: y + 7, class: 'axis ' + tone }, text);
}

const ticks = add(document.getElementById('ticks'), 'g', { transform: `translate(${-LEFT} 0)` });
for (const [x, t, year] of months) add(ticks, 'text', { x, y: 24, class: 'axis mid' + (year ? ' year' : '') }, t);
```
